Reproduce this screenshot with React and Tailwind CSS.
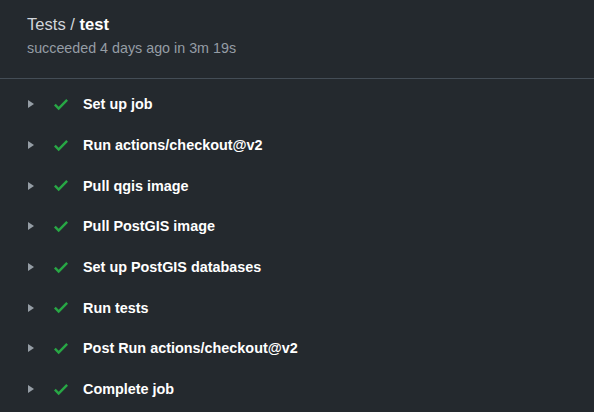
const steps = [
  'Set up job',
  'Run actions/checkout@v2',
  'Pull qgis image',
  'Pull PostGIS image',
  'Set up PostGIS databases',
  'Run tests',
  'Post Run actions/checkout@v2',
  'Complete job',
]

const Triangle = () => (
  <svg width="6" height="8" viewBox="0 0 6 8" className="shrink-0 fill-[#959da5]">
    <path d="M0 0l6 4-6 4z" />
  </svg>
)

const Check = () => (
  <svg width="14" height="18.67" viewBox="0 0 12 16" className="shrink-0 fill-[#28a745]">
    <path fillRule="evenodd" d="M12 5l-8 8-4-4 1.5-1.5L4 10l6.5-6.5L12 5z" />
  </svg>
)

const App = () => {
  return (
    <div className="w-[594px] h-[412px] overflow-hidden bg-[#24292e] font-['Liberation_Sans',Arial,sans-serif]">
      <div className="px-[27px] pt-[13px] pb-5 border-b border-[#444d56]">
        <h1 className="text-[16.6px] leading-6 text-[#d1d5da]">
          Tests / <span className="font-bold text-white">test</span>
        </h1>
        <p className="mt-[1px] text-[14.3px] leading-5 text-[#959da5]">
          succeeded 4 days ago in 3m 19s
        </p>
      </div>
      <ul className="pt-[5px]">
        {steps.map(step => (
          <li key={step} className="flex items-center h-[40.7px] pl-[28px]">
            <Triangle />
            <span className="ml-[19.5px] flex items-center"><Check /></span>
            <span className="ml-[15.5px] text-[14.4px] leading-5 font-bold text-white">{step}</span>
          </li>
        ))}
      </ul>
    </div>
  )
}

export default App
